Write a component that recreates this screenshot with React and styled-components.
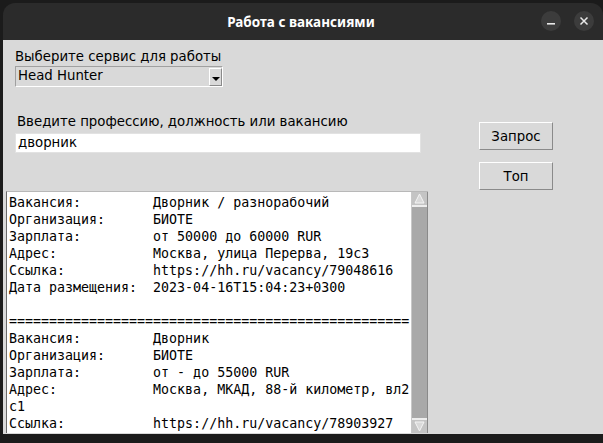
import React from 'react';
import styled, { createGlobalStyle } from 'styled-components';

const GlobalStyle = createGlobalStyle`
  html, body {
    margin: 0;
    padding: 0;
    background: #1b1b1b;
    width: 603px;
    height: 443px;
    overflow: hidden;
  }
`;

const Window = styled.div`
  margin: 3px 0 0 3px;
  width: 600px;
  display: flex;
  flex-direction: column;
`;

const TitleBar = styled.div`
  height: 37px;
  background: #2b2b2b;
  border-radius: 12px 12px 0 0;
  display: flex;
  align-items: center;
  justify-content: center;
  position: relative;
`;

const Title = styled.div`
  font-family: 'Noto Sans', 'DejaVu Sans', sans-serif;
  font-weight: 700;
  font-size: 13.5px;
  color: #ffffff;
  margin-left: -4px;
`;

const Controls = styled.div`
  position: absolute;
  right: 9px;
  top: 8px;
  display: flex;
  gap: 13px;
`;

const CircleButton = styled.div`
  width: 20px;
  height: 20px;
  border-radius: 50%;
  background: #3c3c3c;
  display: flex;
  align-items: center;
  justify-content: center;
`;

const Body = styled.div`
  height: 394px;
  background: #d9d9d9;
  display: flex;
  font-family: 'DejaVu Sans', sans-serif;
  font-size: 13.3px;
  color: #000;
`;

const LeftColumn = styled.div`
  display: flex;
  flex-direction: column;
  padding-left: 3px;
  width: 425px;
`;

const Label = styled.div`
  margin-left: ${(p) => p.$indent}px;
  margin-top: ${(p) => p.$top}px;
  height: 17px;
  line-height: 17px;
`;

const Combo = styled.div`
  margin-left: 9px;
  margin-top: 1px;
  width: 206px;
  height: 19px;
  border-top: 1px solid #a0a0a0;
  border-left: 1px solid #a0a0a0;
  border-right: 1px solid #ffffff;
  border-bottom: 1px solid #ffffff;
  display: flex;
  align-items: stretch;
`;

const ComboText = styled.div`
  flex: 1;
  padding-left: 2px;
  line-height: 18px;
`;

const ComboArrow = styled.div`
  width: 11px;
  margin: 1px 0 0;
  border-top: 1px solid #ffffff;
  border-left: 1px solid #ffffff;
  border-right: 1px solid #8a8a8a;
  border-bottom: 1px solid #8a8a8a;
  display: flex;
  align-items: flex-end;
  justify-content: center;
  padding-bottom: 4px;
`;

const Entry = styled.div`
  margin-left: 9px;
  margin-top: 3px;
  width: 402px;
  height: 18px;
  background: #ffffff;
  border: 1px solid #e2e2e2;
  line-height: 18px;
  padding-left: 2px;
`;

const TextArea = styled.div`
  margin-top: 38px;
  display: flex;
  height: 241px;
  border-left: 1px solid #6a6a6a;
  border-top: 1px solid #b8b8b8;
  width: 421px;
`;

const TextContent = styled.pre`
  margin: 0;
  flex: 1;
  background: #ffffff;
  padding: 2px 0 0 2px;
  font-family: 'DejaVu Sans Mono', monospace;
  font-size: 13.3px;
  line-height: 17px;
  overflow: hidden;
  white-space: pre;
`;

const Scrollbar = styled.div`
  width: 15px;
  border-left: 1px solid #c8c8c8;
  border-right: 1px solid #8a8a8a;
  background: #a9a9a9;
  display: flex;
  flex-direction: column;
  justify-content: space-between;
`;

const ScrollArrow = styled.div`
  height: 13px;
  background: #c4c4c4;
  display: flex;
  align-items: center;
  justify-content: center;
  border-${(p) => (p.$up ? 'bottom' : 'top')}: 2px solid #eeeeee;
`;

const RightColumn = styled.div`
  display: flex;
  flex-direction: column;
  padding-top: 82px;
  padding-left: 48px;
  gap: 12px;
`;

const Button = styled.div`
  width: 72px;
  height: 26px;
  border-top: 1px solid #ffffff;
  border-left: 1px solid #ffffff;
  border-right: 1px solid #8a8a8a;
  border-bottom: 1px solid #8a8a8a;
  display: flex;
  align-items: center;
  justify-content: center;
  font-size: 13.3px;
`;

const row = (label, value) => (label + ':').padEnd(18, ' ') + value;

const lines = [
  row('Вакансия', 'Дворник / разнорабочий'),
  row('Организация', 'БИОТЕ'),
  row('Зарплата', 'от 50000 до 60000 RUR'),
  row('Адрес', 'Москва, улица Перерва, 19с3'),
  row('Ссылка', 'https://hh.ru/vacancy/79048616'),
  row('Дата размещения', '2023-04-16T15:04:23+0300'),
  '',
  '='.repeat(50),
  row('Вакансия', 'Дворник'),
  row('Организация', 'БИОТЕ'),
  row('Зарплата', 'от - до 55000 RUR'),
  row('Адрес', 'Москва, МКАД, 88-й километр, вл2'),
  'с1',
  row('Ссылка', 'https://hh.ru/vacancy/78903927'),
];

const App = () => (
  <>
    <GlobalStyle />
    <Window>
      <TitleBar>
        <Title>Работа с вакансиями</Title>
        <Controls>
          <CircleButton>
            <svg width="10" height="10" viewBox="0 0 10 10">
              <rect x="1" y="7" width="8" height="1.6" fill="#e8e8e8" />
            </svg>
          </CircleButton>
          <CircleButton>
            <svg width="10" height="10" viewBox="0 0 10 10">
              <path d="M1.5 1.5 L8.5 8.5 M8.5 1.5 L1.5 8.5" stroke="#e8e8e8" strokeWidth="1.5" />
            </svg>
          </CircleButton>
        </Controls>
      </TitleBar>
      <Body>
        <LeftColumn>
          <Label $indent={9} $top={8}>Выберите сервис для работы</Label>
          <Combo>
            <ComboText>Head Hunter</ComboText>
            <ComboArrow>
              <svg width="8" height="4" viewBox="0 0 8 4">
                <path d="M0 0 H8 L4 4 Z" fill="#000" />
              </svg>
            </ComboArrow>
          </Combo>
          <Label $indent={11} $top={26}>Введите профессию, должность или вакансию</Label>
          <Entry>дворник</Entry>
          <TextArea>
            <TextContent>{lines.join('\n')}</TextContent>
            <Scrollbar>
              <ScrollArrow $up>
                <svg width="11" height="11" viewBox="0 0 11 11">
                  <path d="M5.5 1 L10 10 H1 Z" fill="#d9d9d9" stroke="#f4f4f4" strokeWidth="1" />
                </svg>
              </ScrollArrow>
              <ScrollArrow>
                <svg width="11" height="11" viewBox="0 0 11 11">
                  <path d="M1 1 H10 L5.5 10 Z" fill="#d9d9d9" stroke="#f4f4f4" strokeWidth="1" />
                </svg>
              </ScrollArrow>
            </Scrollbar>
          </TextArea>
        </LeftColumn>
        <RightColumn>
          <Button>Запрос</Button>
          <Button>Топ</Button>
        </RightColumn>
      </Body>
    </Window>
  </>
);

export default App;
